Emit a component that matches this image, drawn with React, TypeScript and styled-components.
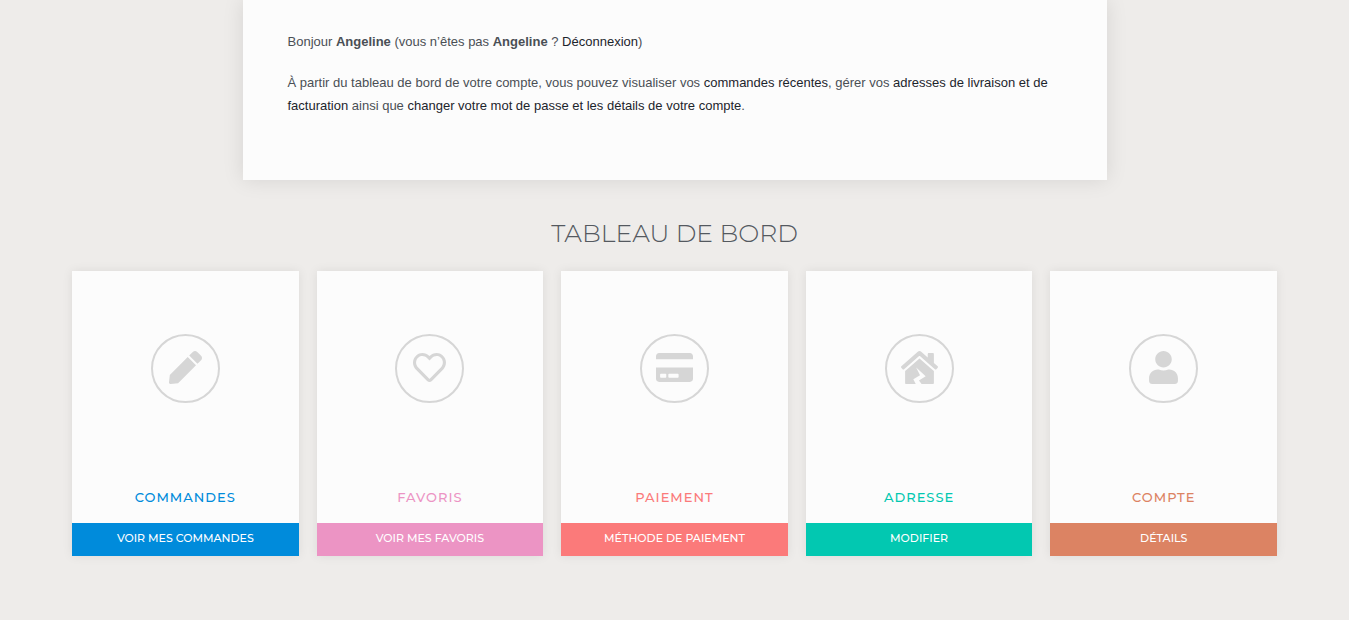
import React from 'react';
import styled, { createGlobalStyle } from 'styled-components';
import type { IconType } from 'react-icons';
import { FaCreditCard, FaHouseDamage, FaPen, FaRegHeart, FaUser } from 'react-icons/fa';

const GlobalStyle = createGlobalStyle`
  *, *::before, *::after {
    box-sizing: border-box;
  }

  body {
    margin: 0;
    background: #eeecea;
    color: #4a4f55;
    font-family: "Liberation Sans", Arial, sans-serif;
    font-size: 13px;
    line-height: 23px;
  }
`;

const headingFont = 'Montserrat, Inter, sans-serif';

const Page = styled.main`
  padding: 0 72px 64px;
`;

const Welcome = styled.section`
  width: 72%;
  max-width: 864px;
  margin: 0 auto;
  padding: 30px 45px 63px;
  background: #fcfcfc;
  box-shadow: 0 0 20px rgba(0, 0, 0, 0.1);
`;

const Paragraph = styled.p`
  margin: 0 0 18px;

  &:last-child {
    margin-bottom: 0;
  }
`;

const TextLink = styled.a`
  color: #1c252c;
  text-decoration: none;
`;

const Heading = styled.h2`
  margin: 36px 0 20px;
  color: #54595f;
  font-family: ${headingFont};
  font-size: 25px;
  font-weight: 300;
  line-height: 35px;
  text-align: center;
  text-transform: uppercase;
`;

const CardGrid = styled.div`
  display: grid;
  grid-template-columns: repeat(5, minmax(0, 1fr));
  gap: 18px;
`;

const Card = styled.article`
  display: flex;
  flex-direction: column;
  background: #fcfcfc;
  box-shadow: 0 0 10px rgba(0, 0, 0, 0.08);
`;

const CardBody = styled.div`
  display: flex;
  flex-direction: column;
  align-items: center;
  padding: 63px 16px 14px;
`;

const IconRing = styled.span`
  display: flex;
  align-items: center;
  justify-content: center;
  width: 69px;
  height: 69px;
  padding-bottom: 2px;
  border: 2px solid #d6d6d6;
  border-radius: 50%;
  color: #d6d6d6;

  svg {
    width: 37px;
    height: 33px;
  }
`;

const CardTitle = styled.h3<{ $color: string }>`
  margin: 83px 0 0;
  color: ${({ $color }) => $color};
  font-family: ${headingFont};
  font-size: 13px;
  font-weight: 500;
  letter-spacing: 1px;
  line-height: 23px;
  text-transform: uppercase;
`;

const CardButton = styled.a<{ $color: string }>`
  padding: 4px 8px 6px;
  background: ${({ $color }) => $color};
  color: #fff;
  font-family: ${headingFont};
  font-size: 11px;
  font-weight: 500;
  line-height: 23px;
  text-align: center;
  text-decoration: none;
  text-transform: uppercase;
`;

interface Shortcut {
  title: string;
  action: string;
  color: string;
  icon: IconType;
}

const shortcuts: Shortcut[] = [
  { title: 'Commandes', action: 'Voir mes commandes', color: '#008bdb', icon: FaPen },
  { title: 'Favoris', action: 'Voir mes favoris', color: '#ec94c4', icon: FaRegHeart },
  { title: 'Paiement', action: 'Méthode de paiement', color: '#fb7a7a', icon: FaCreditCard },
  { title: 'Adresse', action: 'Modifier', color: '#02c8b1', icon: FaHouseDamage },
  { title: 'Compte', action: 'Détails', color: '#dc8363', icon: FaUser },
];

export default function App() {
  return (
    <>
      <GlobalStyle />
      <Page>
        <Welcome>
          <Paragraph>
            Bonjour <strong>Angeline</strong> (vous n’êtes pas <strong>Angeline</strong> ?{' '}
            <TextLink href="#deconnexion">Déconnexion</TextLink>)
          </Paragraph>
          <Paragraph>
            À partir du tableau de bord de votre compte, vous pouvez visualiser vos{' '}
            <TextLink href="#commandes">commandes récentes</TextLink>, gérer vos{' '}
            <TextLink href="#adresses">adresses de livraison et de facturation</TextLink> ainsi que{' '}
            <TextLink href="#compte">changer votre mot de passe et les détails de votre compte</TextLink>.
          </Paragraph>
        </Welcome>
        <Heading>Tableau de bord</Heading>
        <CardGrid>
          {shortcuts.map(({ title, action, color, icon: Icon }) => (
            <Card key={title}>
              <CardBody>
                <IconRing>
                  <Icon aria-hidden />
                </IconRing>
                <CardTitle $color={color}>{title}</CardTitle>
              </CardBody>
              <CardButton $color={color} href={`#${title.toLowerCase()}`}>
                {action}
              </CardButton>
            </Card>
          ))}
        </CardGrid>
      </Page>
    </>
  );
}
